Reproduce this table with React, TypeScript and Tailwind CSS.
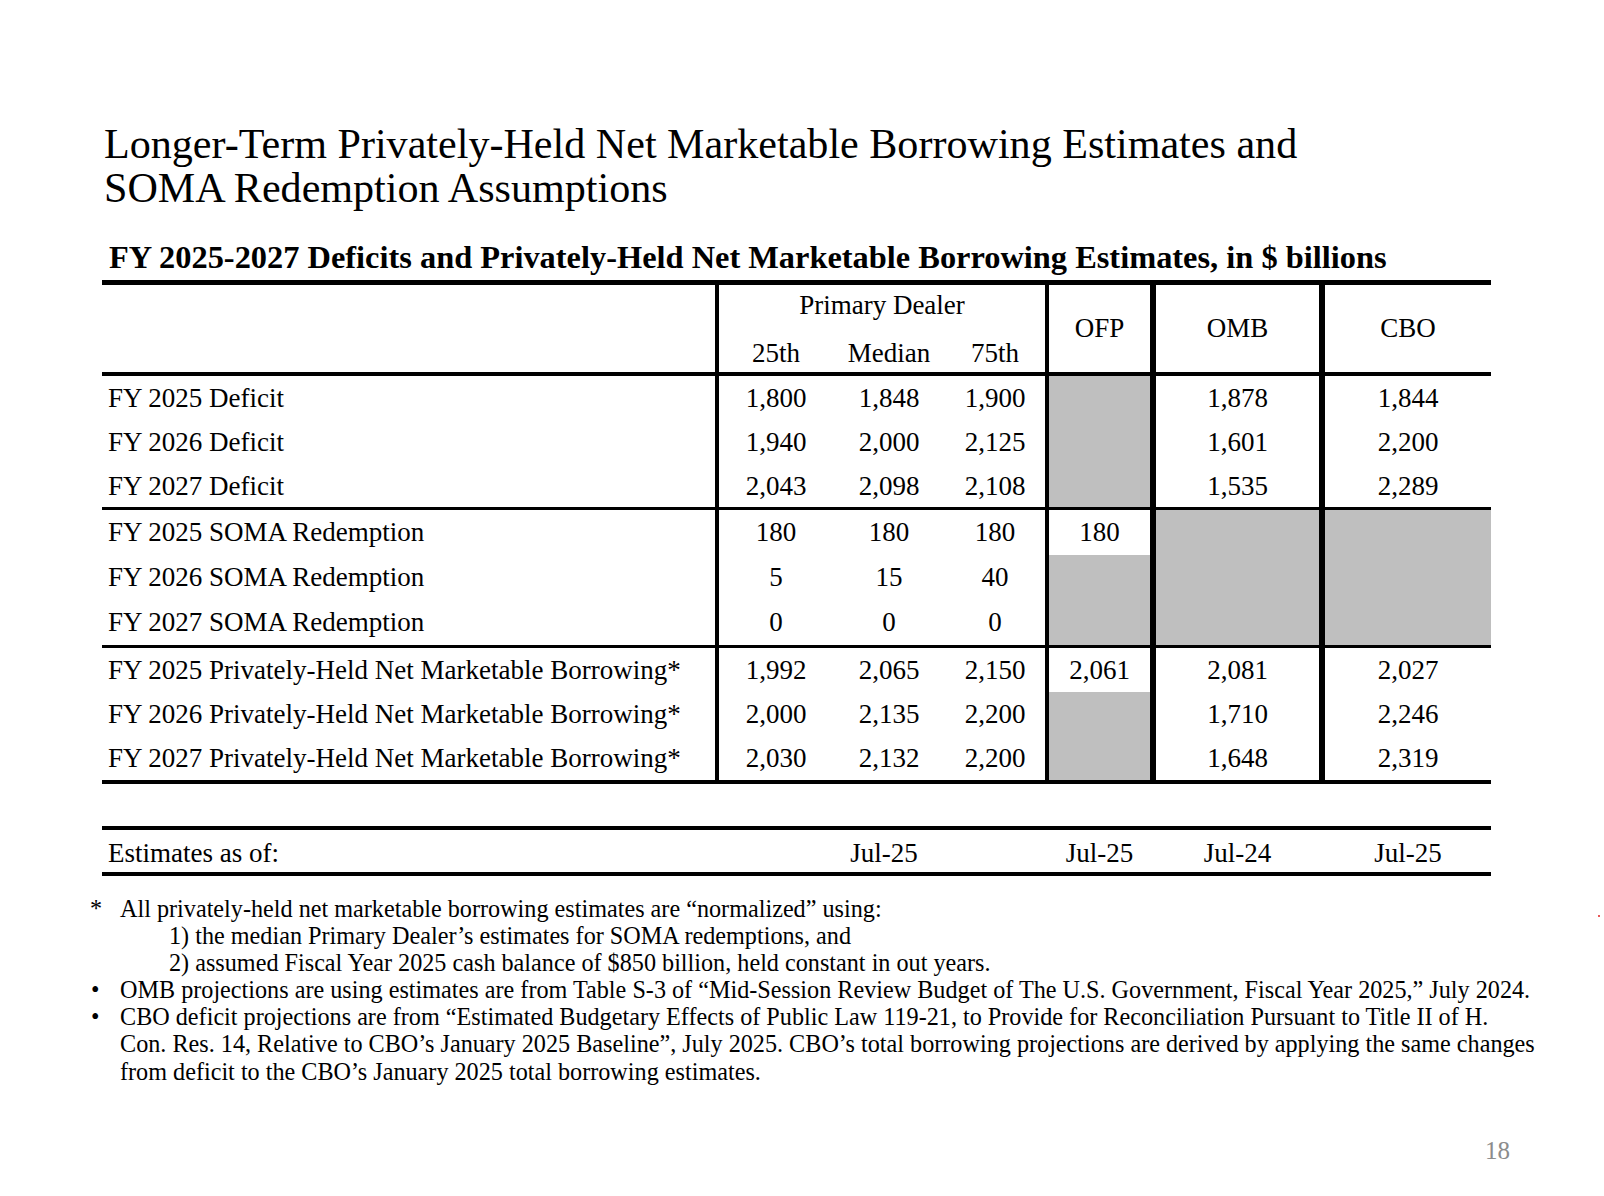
import React from 'react';

type Row = {
  label: string;
  values: (string | null)[];
  h: string;
  bottom: string;
};

const GRAY = 'bg-[#bfbfbf]';

const deficitRows: Row[] = [
  { label: 'FY 2025 Deficit', values: ['1,800', '1,848', '1,900', null, '1,878', '1,844'], h: 'h-[44px] leading-[44px]', bottom: '' },
  { label: 'FY 2026 Deficit', values: ['1,940', '2,000', '2,125', null, '1,601', '2,200'], h: 'h-[44px] leading-[44px]', bottom: '' },
  { label: 'FY 2027 Deficit', values: ['2,043', '2,098', '2,108', null, '1,535', '2,289'], h: 'h-[43px] leading-[44px]', bottom: 'border-b-[3px]' },
];

const somaRows: Row[] = [
  { label: 'FY 2025 SOMA Redemption', values: ['180', '180', '180', '180', null, null], h: 'h-[45px] leading-[44px]', bottom: '' },
  { label: 'FY 2026 SOMA Redemption', values: ['5', '15', '40', null, null, null], h: 'h-[45px] leading-[44px]', bottom: '' },
  { label: 'FY 2027 SOMA Redemption', values: ['0', '0', '0', null, null, null], h: 'h-[45px] leading-[44px]', bottom: 'border-b-[3px]' },
];

const borrowingRows: Row[] = [
  { label: 'FY 2025 Privately-Held Net Marketable Borrowing*', values: ['1,992', '2,065', '2,150', '2,061', '2,081', '2,027'], h: 'h-[44px] leading-[44px]', bottom: '' },
  { label: 'FY 2026 Privately-Held Net Marketable Borrowing*', values: ['2,000', '2,135', '2,200', null, '1,710', '2,246'], h: 'h-[44px] leading-[44px]', bottom: '' },
  { label: 'FY 2027 Privately-Held Net Marketable Borrowing*', values: ['2,030', '2,132', '2,200', null, '1,648', '2,319'], h: 'h-[44px] leading-[44px]', bottom: 'border-b-4' },
];

// right-hand rule after each value column (25th, Median, 75th, OFP, OMB, CBO)
const rightRules = ['', '', 'border-r-4', 'border-r-[6px]', 'border-r-[6px]', ''];

const DataRow: React.FC<{ row: Row }> = ({ row }) => (
  <tr>
    <td className={`p-0 border-black border-r-4 ${row.bottom}`}>
      <div className={`${row.h} pl-[6px] whitespace-nowrap`}>{row.label}</div>
    </td>
    {row.values.map((v, i) => (
      <td key={i} className={`p-0 border-black ${rightRules[i]} ${row.bottom} ${v === null ? GRAY : ''}`}>
        <div className={`${row.h} text-center`}>{v}</div>
      </td>
    ))}
  </tr>
);

const Cols = () => (
  <colgroup>
    <col className="w-[617px]" />
    <col className="w-[114px]" />
    <col className="w-[112px]" />
    <col className="w-[104px]" />
    <col className="w-[107px]" />
    <col className="w-[169px]" />
    <col className="w-[166px]" />
  </colgroup>
);

export default function App() {
  return (
    <div className="relative w-[1604px] h-[1196px] overflow-hidden bg-white text-black font-['Liberation_Serif',serif]">
      <div className="pt-[122px] pl-[104px] text-[42.1px] leading-[44px]">
        <div>Longer-Term Privately-Held Net Marketable Borrowing Estimates and</div>
        <div>SOMA Redemption Assumptions</div>
      </div>

      <div className="mt-[29px] pl-[109px] text-[32.4px] leading-[36px] font-bold whitespace-nowrap">
        FY 2025-2027 Deficits and Privately-Held Net Marketable Borrowing Estimates, in $ billions
      </div>

      <div className="mt-[5px] ml-[102px] text-[27px]">
        <table className="table-fixed w-[1389px] border-separate border-spacing-0 border-t-[5px] border-black">
          <Cols />
          <tbody>
            <tr>
              <td rowSpan={2} className="p-0 border-black border-r-4 border-b-4">
                <div className="h-[87px]" />
              </td>
              <td colSpan={3} className="p-0 border-black border-r-4">
                <div className="h-[44px] leading-[40px] text-center">Primary Dealer</div>
              </td>
              <td rowSpan={2} className="p-0 border-black border-r-[6px] border-b-4">
                <div className="h-[87px] leading-[87px] text-center">OFP</div>
              </td>
              <td rowSpan={2} className="p-0 border-black border-r-[6px] border-b-4">
                <div className="h-[87px] leading-[87px] text-center">OMB</div>
              </td>
              <td rowSpan={2} className="p-0 border-black border-b-4">
                <div className="h-[87px] leading-[87px] text-center">CBO</div>
              </td>
            </tr>
            <tr>
              <td className="p-0 border-black border-b-4">
                <div className="h-[43px] leading-[48px] text-center">25th</div>
              </td>
              <td className="p-0 border-black border-b-4">
                <div className="h-[43px] leading-[48px] text-center">Median</div>
              </td>
              <td className="p-0 border-black border-b-4 border-r-4">
                <div className="h-[43px] leading-[48px] text-center">75th</div>
              </td>
            </tr>
            {deficitRows.map((r) => (
              <DataRow key={r.label} row={r} />
            ))}
            {somaRows.map((r) => (
              <DataRow key={r.label} row={r} />
            ))}
            {borrowingRows.map((r) => (
              <DataRow key={r.label} row={r} />
            ))}
          </tbody>
        </table>

        <div className="mt-[42px] w-[1389px] flex border-y-4 border-black h-[50px] leading-[46px]">
          <div className="w-[617px] pl-[6px]">Estimates as of:</div>
          <div className="w-[330px] text-center">Jul-25</div>
          <div className="w-[101px] text-center">Jul-25</div>
          <div className="w-[163px] ml-[6px] text-center">Jul-24</div>
          <div className="w-[166px] ml-[6px] text-center">Jul-25</div>
        </div>
      </div>

      <div className="mt-[19px] ml-[88px] text-[24.2px] leading-[27.1px] whitespace-nowrap">
        <div className="flex">
          <span className="w-[32px] pl-[2px]">*</span>
          <span>All privately-held net marketable borrowing estimates are “normalized” using:</span>
        </div>
        <div className="pl-[81px]">1) the median Primary Dealer’s estimates for SOMA redemptions, and</div>
        <div className="pl-[81px]">2) assumed Fiscal Year 2025 cash balance of $850 billion, held constant in out years.</div>
        <div className="flex">
          <span className="w-[32px] pl-[3px]">•</span>
          <span>
            OMB projections are using estimates are from Table S-3 of “Mid-Session Review Budget of The U.S. Government, Fiscal Year 2025,” July 2024.
          </span>
        </div>
        <div className="flex">
          <span className="w-[32px] pl-[3px]">•</span>
          <div>
            <div>CBO deficit projections are from “Estimated Budgetary Effects of Public Law 119-21, to Provide for Reconciliation Pursuant to Title II of H.</div>
            <div>Con. Res. 14, Relative to CBO’s January 2025 Baseline”, July 2025. CBO’s total borrowing projections are derived by applying the same changes</div>
            <div>from deficit to the CBO’s January 2025 total borrowing estimates.</div>
          </div>
        </div>
      </div>

      <div className="mt-[52px] w-[1510px] text-right text-[25px] leading-[28px] text-[#8c8c8c]">18</div>

      <div className="absolute left-[1598px] top-[915px] w-[2px] h-[2px] rounded-full bg-[#e02020]" />
    </div>
  );
}
